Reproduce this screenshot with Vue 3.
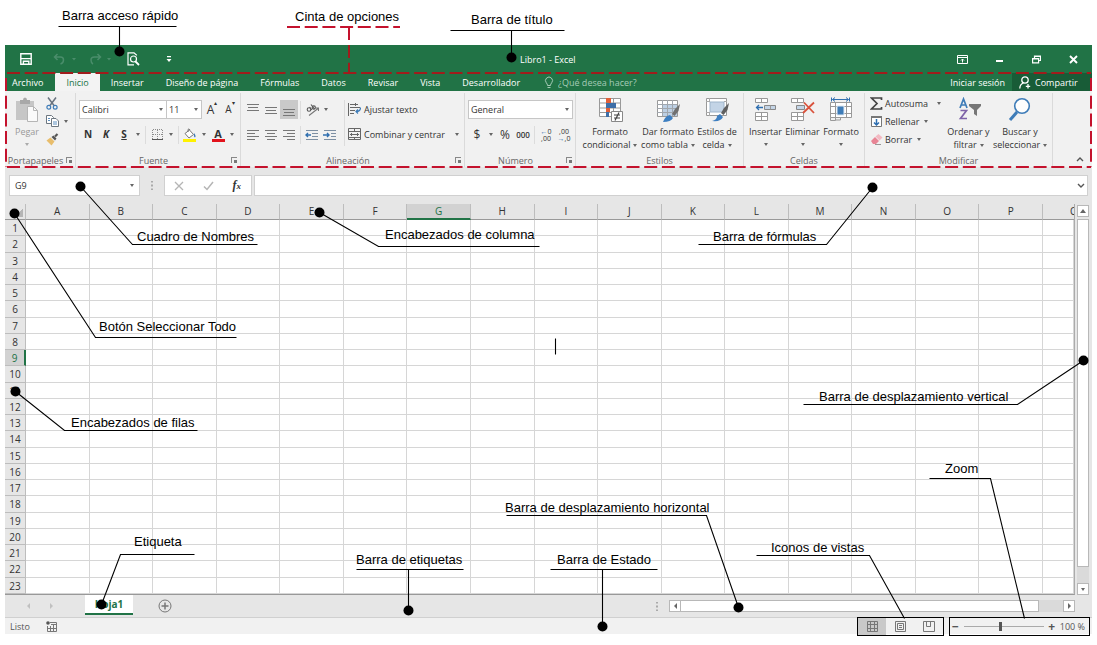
<script setup>
import { ref } from 'vue'

const tabs = ['Archivo', 'Inicio', 'Insertar', 'Diseño de página', 'Fórmulas', 'Datos', 'Revisar', 'Vista', 'Desarrollador']
const activeTab = ref('Inicio')
const columns = 'ABCDEFGHIJKLMNOPQ'.split('')
const rows = Array.from({ length: 23 }, (_, i) => i + 1)
const zoom = ref(46)

const callouts = [
  { text: 'Barra acceso rápido', x: 62, y: 20, line: '58,26 176,26' },
  { text: 'Barra de título', x: 471, y: 24, line: '450,30 564,30' },
  { text: 'Cuadro de Nombres', x: 137, y: 241, line: '80,186 132,244 257,244', dot: [80, 186] },
  { text: 'Encabezados de columna', x: 385, y: 239, line: '319,212 378,246 539,246', dot: [319, 212] },
  { text: 'Botón Seleccionar Todo', x: 99, y: 331, line: '14,213 95,337 236,337', dot: [14, 213] },
  { text: 'Encabezados de filas', x: 71, y: 427, line: '15,391 64,430 197,430', dot: [15, 391] },
  { text: 'Barra de fórmulas', x: 713, y: 241, line: '872,187 826,244 698,244', dot: [872, 187] },
  { text: 'Barra de desplazamiento vertical', x: 819, y: 401, line: '1083,360 1017,404 803,404', dot: [1083, 360] },
  { text: 'Zoom', x: 945, y: 473, line: '929,478 990,478 1024,618' },
  { text: 'Barra de desplazamiento horizontal', x: 505, y: 512, line: '506,515 706,515 738,607', dot: [738, 607] },
  { text: 'Iconos de vistas', x: 771, y: 552, line: '756,555 869,555 904,618' },
  { text: 'Etiqueta', x: 134, y: 546, line: '194,554 120,554 101,604', dot: [101, 604] },
  { text: 'Barra de etiquetas', x: 356, y: 564, line: '356,569 463,569' },
  { text: 'Barra de Estado', x: 557, y: 564, line: '550,569 657,569' }
]
const stems = [
  { x: 119, y1: 26, y2: 51 },
  { x: 511, y1: 30, y2: 57 },
  { x: 408, y1: 569, y2: 610 },
  { x: 602, y1: 569, y2: 626 }
]
</script>

<template>
  <main class="page">
    <div class="window">
      <header class="titlebar">
        <button class="tb save" aria-label="Guardar">
          <svg width="12" height="12" viewBox="0 0 12 12" fill="none" stroke="#fff" stroke-width="1.4"><path d="M.8.8h10.4v10.4H.8zM.8 5.6h10.4M3.400 11V8.200h5.400V11" /></svg>
        </button>
        <button class="tb undo" aria-label="Deshacer">
          <svg width="24" height="12" viewBox="0 0 24 12" fill="none" stroke="#4a8d6b" stroke-width="1.5"><path d="M4.500 1 1.500 4l3 3M2 4h5.500q3 0 3 3t-3 4" /><path d="m19 5 2 2.500 2-2.500z" fill="#4a8d6b" stroke="none" /></svg>
        </button>
        <button class="tb redo" aria-label="Rehacer">
          <svg width="24" height="12" viewBox="0 0 24 12" fill="none" stroke="#4a8d6b" stroke-width="1.5"><path d="m8.500 1 3 3-3 3M11 4H5.500q-3.500 0-3.500 3t2 4" /><path d="m18 5 2 2.500 2-2.500z" fill="#4a8d6b" stroke="none" /></svg>
        </button>
        <button class="tb preview" aria-label="Vista previa">
          <svg width="13" height="14" viewBox="0 0 13 14" fill="none" stroke="#fff" stroke-width="1.200"><path d="M9.500 3.500V3L7 .8H1v12h6" /><circle cx="6.500" cy="7" r="3" /><path d="m8.500 9.500 3.500 3.500" stroke-width="1.800" /></svg>
        </button>
        <button class="tb custom" aria-label="Personalizar">
          <svg width="6" height="8" viewBox="0 0 6 8" fill="#fff"><path d="M1 1h4v1.200H1zM.5 4h5L3 7z" /></svg>
        </button>
        <h1 class="doc">Libro1 - Excel</h1>
        <button class="wb" aria-label="Opciones de cinta">
          <svg width="11" height="9" viewBox="0 0 11 9" fill="none" stroke="#fff"><path d="M.5.500h10v8H.5zM.5 2.500h10M5.500 7.500V4M4 5.500 5.500 4 7 5.500" /></svg>
        </button>
        <button class="wb" aria-label="Minimizar">
          <svg width="9" height="9" viewBox="0 0 9 9"><path d="M1 5h7v2H1z" fill="#fff" /></svg>
        </button>
        <button class="wb" aria-label="Restaurar">
          <svg width="9" height="9" viewBox="0 0 9 9" fill="none" stroke="#fff" stroke-width="1.200"><path d="M2.500 3V1h6v4.500h-2M.6 3.500h6v4.300h-6zM2.500 1.500h6M.6 4h6" /></svg>
        </button>
        <button class="wb" aria-label="Cerrar">
          <svg width="9" height="9" viewBox="0 0 9 9" stroke="#fff" stroke-width="1.900"><path d="m1 1 7 7M8 1 1 8" /></svg>
        </button>
      </header>

      <nav class="tabs">
        <button v-for="t in tabs" :key="t" class="tab" :class="{ active: t === activeTab }" @click="activeTab = t">{{ t }}</button>
        <label class="tell">
          <svg width="10" height="13" viewBox="0 0 10 13" fill="none" stroke="#a5cbb6"><path d="M3.500 9.500Q3.500 8 2.300 6.800A3.500 3.500 0 1 1 7.700 6.800Q6.500 8 6.500 9.500zM3.500 11.500h3" /></svg>
          <input type="text" placeholder="¿Qué desea hacer?" aria-label="¿Qué desea hacer?">
        </label>
        <button class="signin">Iniciar sesión</button>
        <button class="share">
          <svg width="12" height="13" viewBox="0 0 12 13" fill="none" stroke="#fff" stroke-width="1.300"><circle cx="6" cy="4" r="3.200" /><path d="M.8 12.500Q1 8 4.500 7M9 8v4.500M6.800 10.300h4.400" /></svg>
          Compartir
        </button>
      </nav>

      <section class="ribbon">
        <div class="group g-clip">
          <div class="body">
            <button class="big paste">
              <svg width="24" height="26" viewBox="0 0 24 26"><path d="M1 4h18v19H1z" fill="#c6c6c6" /><path d="M5 7V3h3q0-2.500 2-2.500T12 3h3v4z" fill="#a8a8a8" /><path d="M12.500 9.500h6l4 4v11h-10z" fill="#fafafa" stroke="#b5b5b5" /><path d="M18.500 9.500v4h4" fill="none" stroke="#b5b5b5" /></svg>
              <span>Pegar</span><i class="arr soft"></i>
            </button>
            <div class="stack">
              <button class="ib" aria-label="Cortar">
                <svg width="12" height="13" viewBox="0 0 12 13" fill="none"><path d="m2 .5 6 8M10 .5l-6 8" stroke="#6a7480" stroke-width="1.500" /><circle cx="2.800" cy="10.300" r="1.900" stroke="#3e7cb8" stroke-width="1.200" /><circle cx="9.200" cy="10.300" r="1.900" stroke="#3e7cb8" stroke-width="1.200" /></svg>
              </button>
              <button class="ib wide" aria-label="Copiar">
                <svg width="13" height="12" viewBox="0 0 13 12" fill="#fff" stroke="#6d7780"><path d="M.5.500h5l2 2v6h-7z" /><path d="M5.500 3.500h4.500l2.500 2.500v5.500h-7z" /><path d="M2 3.500h2M2 5.500h2M7 7h4M7 9h4" stroke="#5d8fbf" /></svg>
                <i class="arr"></i>
              </button>
              <button class="ib" aria-label="Copiar formato">
                <svg width="13" height="13" viewBox="0 0 13 13"><path d="m.5 7.500 4-3 4 4-3 4z" fill="#e8bd6c" /><path d="m5.500 4 2-1.500 3 3L9 7.500z" fill="#555" /><path d="m9 3.500 2.500-2.500" stroke="#555" stroke-width="2.200" /></svg>
              </button>
            </div>
          </div>
          <footer><span>Portapapeles</span><i class="launch"></i></footer>
        </div>

        <div class="group g-font">
          <div class="body rows">
            <div class="row">
              <label class="sel s-font"><select aria-label="Fuente"><option>Calibri</option></select><i class="arr"></i></label>
              <label class="sel s-size"><select aria-label="Tamaño"><option>11</option></select><i class="arr"></i></label>
              <div class="sizers">
                <button class="b grow" aria-label="Aumentar tamaño">A<sup>▴</sup></button>
                <button class="b shrink" aria-label="Disminuir tamaño">A<sup>▾</sup></button>
              </div>
            </div>
            <div class="row">
              <button class="b nks"><b>N</b></button>
              <button class="b nks"><b><em>K</em></b></button>
              <button class="b nks"><b><u>S</u></b></button>
              <i class="arr d"></i><i class="sep"></i>
              <button class="b" aria-label="Bordes">
                <svg width="11" height="11" viewBox="0 0 11 11" fill="none" stroke="#8a8a8a"><path d="M.5 10V.5h10V10M5.500 1v9M1 5.500h9" stroke-dasharray="1 1" /><path d="M0 10.500h11" stroke="#555" /></svg>
              </button>
              <i class="arr d"></i><i class="sep"></i>
              <button class="b" aria-label="Color de relleno">
                <svg width="14" height="14" viewBox="0 0 14 14"><path d="m2 5.500 4.500-3.500 4 4.500L6 10z" fill="#fff" stroke="#777" /><path d="M5 4V1.500Q6 0 7 2" fill="none" stroke="#777" /><path d="M11 5q2.500 3 1 4.500Q10.500 9 11 5" fill="#3e7cb8" /><path d="M0 11h13v3H0z" fill="#fff200" /></svg>
              </button>
              <i class="arr d"></i>
              <button class="b fc" aria-label="Color de fuente"><b>A</b></button>
              <i class="arr d"></i>
            </div>
          </div>
          <footer><span>Fuente</span><i class="launch"></i></footer>
        </div>

        <div class="group g-align">
          <div class="body">
            <div class="rows left">
              <div class="row">
                <button class="b" aria-label="Alinear arriba"><svg width="12" height="12" viewBox="0 0 12 12" stroke="#777"><path d="M0 .5h12M1 3.500h10M0 6.500h12" /></svg></button>
                <button class="b" aria-label="Alinear en medio"><svg width="12" height="12" viewBox="0 0 12 12" stroke="#777"><path d="M0 3.500h12M1 6.500h10M0 9.500h12" /></svg></button>
                <button class="b on" aria-label="Alinear abajo"><svg width="12" height="12" viewBox="0 0 12 12" stroke="#777"><path d="M0 5.500h12M1 8.500h10M0 11.500h12" /></svg></button>
                <i class="sep"></i>
                <button class="b" aria-label="Orientación"><svg width="13" height="12" viewBox="0 0 13 12" fill="none" stroke="#555" stroke-width="1.100"><circle cx="3" cy="5.500" r="1.800" /><path d="m3.500 3 2.500 3M5 .5l3.500 4.500" /><circle cx="7.800" cy="3.500" r="1.600" /><path d="m3 11.500 9-7M12.500 7V4H9.500" stroke="#777" /></svg></button>
                <i class="arr d"></i>
              </div>
              <div class="row">
                <button class="b" aria-label="Izquierda"><svg width="12" height="12" viewBox="0 0 12 12" stroke="#777"><path d="M0 1.500h12M0 4.500h8M0 7.500h12M0 10.500h8" /></svg></button>
                <button class="b" aria-label="Centrar"><svg width="12" height="12" viewBox="0 0 12 12" stroke="#777"><path d="M0 1.500h12M2 4.500h8M0 7.500h12M2 10.500h8" /></svg></button>
                <button class="b" aria-label="Derecha"><svg width="12" height="12" viewBox="0 0 12 12" stroke="#777"><path d="M0 1.500h12M4 4.500h8M0 7.500h12M4 10.500h8" /></svg></button>
                <i class="sep"></i>
                <button class="b" aria-label="Disminuir sangría"><svg width="14" height="12" viewBox="0 0 14 12" stroke="#7d8fa3" fill="none"><path d="M1 1.500h12M7 4.500h6M7 7.500h6M1 10.500h12" /><path d="M6 6H1M3 4 1 6l2 2" stroke="#2f6fb0" stroke-width="1.400" /></svg></button>
                <button class="b" aria-label="Aumentar sangría"><svg width="14" height="12" viewBox="0 0 14 12" stroke="#7d8fa3" fill="none"><path d="M1 1.500h12M8 4.500h5M8 7.500h5M1 10.500h12" /><path d="M0 6h5.500M4 4l2 2-2 2" stroke="#2f6fb0" stroke-width="1.400" /></svg></button>
              </div>
            </div>
            <i class="sep tall"></i>
            <div class="rows wraps">
              <button class="row text">
                <svg width="13" height="13" viewBox="0 0 13 13" fill="none" stroke="#666"><path d="M.5 0v13M2 1.500h8M2 4.500h10M2 7.500h5M2 10.500h4M7.500 0v3" /><path d="M12.500 4.500q0 4-4 4M10 6.500l-2 2 2 2" stroke="#3e7cb8" stroke-width="1.200" /></svg>
                Ajustar texto
              </button>
              <button class="row text">
                <svg width="13" height="13" viewBox="0 0 13 13" fill="none" stroke="#666"><path d="M.5.500h12v11H.5zM.5 3.500h12M.5 9.500h12M6.500.500v3M6.500 9.500v2M2 6.500h9M4 5 2.500 6.500 4 8M9 5l1.500 1.500L9 8" /></svg>
                Combinar y centrar<i class="arr after"></i>
              </button>
            </div>
          </div>
          <footer><span>Alineación</span><i class="launch"></i></footer>
        </div>

        <div class="group g-num">
          <div class="body rows">
            <div class="row"><label class="sel s-num"><select aria-label="Formato de número"><option>General</option></select><i class="arr"></i></label></div>
            <div class="row">
              <button class="b money">$</button><i class="arr d"></i>
              <button class="b money">%</button>
              <button class="b zeros">000</button>
              <i class="sep"></i>
              <button class="b dec" aria-label="Aumentar decimales"><span><u>←</u>0</span><span>,00</span></button>
              <button class="b dec" aria-label="Disminuir decimales"><span>,00</span><span><u>→</u>,0</span></button>
            </div>
          </div>
          <footer><span>Número</span><i class="launch"></i></footer>
        </div>

        <div class="group g-styles">
          <div class="body">
            <button class="big w58">
              <svg width="25" height="26" viewBox="0 0 25 26"><path d="M1.500 1.500h21v18h-21zM8.500 1v19M15.500 1v19M1 6h21M1 11h21M1 15.500h21" fill="#fff" stroke="#999" /><path d="M8 1h5v5H8zM8 11h4v4H8z" fill="#e0603a" /><path d="M8 6h10v5H8zM8 15h3v5H8z" fill="#3e6fa8" /><path d="M13.500 14.500h11v10h-11z" fill="#fff" stroke="#888" /><path d="M16 18h6M16 21h6M21 15.500l-4 8" stroke="#444" stroke-width="1.200" /></svg>
              <span>Formato<br>condicional<i class="arr in"></i></span>
            </button>
            <button class="big w58">
              <svg width="25" height="26" viewBox="0 0 25 26"><path d="M1.500 3.500h20v16h-20z" fill="#fff" stroke="#999" /><path d="M7 7h14v12H7z" fill="#bdd0e4" /><path d="M6.500 3v16M11.500 3v16M16.500 3v16M1 7.500h20M1 11.500h20M1 15.500h20" stroke="#a0a6ad" fill="none" /><path d="m24 7-1.500 7-4 5-2.500-2 3-5z" fill="#707070" /><path d="M7 25q2-6 7-7l3 3q-2 4-10 4" fill="#3e7fc1" /></svg>
              <span>Dar formato<br>como tabla<i class="arr in"></i></span>
            </button>
            <button class="big w40">
              <svg width="25" height="26" viewBox="0 0 25 26"><path d="M1.500 1.500h20v17h-20z" fill="#fff" stroke="#999" /><path d="M5 5h14v10H5z" fill="#c3d4e6" stroke="#9eb4ca" /><path d="M4.500 1v4M1 4.500h4M4.500 15v4M1 15.500h4M19 4.500h3" stroke="#aaa" /><path d="m24 6-1.500 7-4 5-2.500-2 3-5z" fill="#606060" /><path d="M7 24q5-1 5-5l3-2 3 3q-2 5-11 4" fill="#3e7fc1" /></svg>
              <span>Estilos de<br>celda<i class="arr in"></i></span>
            </button>
          </div>
          <footer><span>Estilos</span></footer>
        </div>

        <div class="group g-cells">
          <div class="body">
            <button class="big w36">
              <svg width="23" height="26" viewBox="0 0 23 26" fill="#fff" stroke="#999"><path d="M1.500 1.500h12v4h-12zM7.500 1.500v4M1.500 15.500h12v8h-12zM7.500 15.500v8M1.500 19.500h12" /><path d="M10.500 8.500h11v4h-11z" fill="#c3d4e6" stroke="#888" /><path d="M16.500 8.500v4" /><path d="M9 10.500H2.500M5 8l-2.500 2.500L5 13" stroke="#2f6fb0" stroke-width="1.300" fill="none" /></svg>
              <span>Insertar</span><i class="arr"></i>
            </button>
            <button class="big w36">
              <svg width="25" height="26" viewBox="0 0 25 26" fill="#fff" stroke="#999"><path d="M1.500 1.500h12v4h-12zM7.500 1.500v4M1.500 15.500h12v8h-12zM7.500 15.500v8M1.500 19.500h12" /><path d="M6.500 8.500h8v4h-8z" fill="#c3d4e6" stroke="#888" /><path d="m14 5.500 10 10.500M24 5.500 13 16" stroke="#d9523c" stroke-width="1.800" /></svg>
              <span>Eliminar</span><i class="arr"></i>
            </button>
            <button class="big w40">
              <svg width="24" height="26" viewBox="0 0 24 26" fill="none" stroke="#999"><path d="M1.500 5.500h21v15h-21z" fill="#fff" /><path d="M6.500 5.500v18h-5v-3M17.500 5.500v15M1.500 9.500h21M1.500 16.500h21M11.500 20v3h-5" /><path d="M8 9h7v9H8z" fill="#3e7cb8" stroke="#dfe8f1" /><path d="M2.500.500v4M20.500.500v4M3.500 2.500h16M6 .5l-2.500 2L6 4.500M17 .5l2.500 2-2.500 2" stroke="#2f6fb0" /></svg>
              <span>Formato</span><i class="arr"></i>
            </button>
          </div>
          <footer><span>Celdas</span></footer>
        </div>

        <div class="group g-edit">
          <div class="body">
            <div class="stack wide-stack">
              <button class="text"><svg width="13" height="13" viewBox="0 0 13 13" fill="none" stroke="#444" stroke-width="1.700"><path d="M11.500 3V1H1.500L7 6.500l-5.500 5.500h10v-2" /></svg>Autosuma<i class="arr after"></i></button>
              <button class="text"><svg width="13" height="13" viewBox="0 0 13 13" fill="#fff" stroke="#777"><path d="M1.500 1.500h10v10h-10z" /><path d="M1 2h11" stroke-width="2" /><path d="M6.500 4v6M4 7.500l2.500 2.500L9 7.500" stroke="#2f6fb0" stroke-width="1.500" fill="none" /></svg>Rellenar<i class="arr in"></i></button>
              <button class="text"><svg width="13" height="13" viewBox="0 0 13 13"><path d="m1 8 4-4 4 4-3 3H3z" fill="#e88595" /><path d="m5.500 3.500 3-2.500 4 3.500-3 3z" fill="#f3b9c2" /><path d="M5 11.500h6" stroke="#999" /></svg>Borrar<i class="arr in"></i></button>
            </div>
            <button class="big w45">
              <svg width="26" height="26" viewBox="0 0 26 26" fill="none"><path d="m4 11 3.500-9L11 11M5.300 8h4.500" stroke="#3e7cb8" stroke-width="1.700" /><path d="M4.500 13.500h6l-6 8h6.500" stroke="#7e63a8" stroke-width="1.700" /><path d="M13 7h12v2l-4 4v6l-3-2v-4l-5-4z" fill="#777" /></svg>
              <span>Ordenar y<br>filtrar<i class="arr in"></i></span>
            </button>
            <button class="big w56">
              <svg width="24" height="26" viewBox="0 0 24 26" fill="none" stroke="#3e7cb8"><circle cx="14" cy="9" r="7.300" stroke-width="1.600" fill="#fdfdfd" /><path d="m9 15-7 8" stroke-width="3" /></svg>
              <span>Buscar y<br>seleccionar<i class="arr in"></i></span>
            </button>
          </div>
          <footer><span>Modificar</span></footer>
        </div>
        <button class="collapse" aria-label="Contraer la cinta"><svg width="8" height="6" viewBox="0 0 8 6" fill="none" stroke="#555" stroke-width="1.400"><path d="m1 5 3-3 3 3" /></svg></button>
      </section>

      <section class="fbar">
        <label class="namebox"><input type="text" value="G9" aria-label="Cuadro de nombres"><i class="arr"></i></label>
        <i class="dots"></i>
        <div class="fbtns">
          <button aria-label="Cancelar"><svg width="10" height="10" viewBox="0 0 10 10" stroke="#b5b5b5" stroke-width="1.300"><path d="m1 1 8 8M9 1 1 9" /></svg></button>
          <button aria-label="Introducir"><svg width="11" height="10" viewBox="0 0 11 10" fill="none" stroke="#b5b5b5" stroke-width="1.500"><path d="m1 5.500 3 3L10 1" /></svg></button>
          <button class="fx">f<sub>x</sub></button>
        </div>
        <label class="formula"><input type="text" aria-label="Barra de fórmulas"><svg width="8" height="6" viewBox="0 0 8 6" fill="none" stroke="#555" stroke-width="1.400"><path d="m1 1 3 3 3-3" /></svg></label>
      </section>

      <section class="sheet">
        <div class="grid">
          <table>
            <colgroup><col class="c-num"><col v-for="c in 16" :key="c"><col class="c-last"></colgroup>
            <thead>
              <tr><th class="corner" aria-label="Seleccionar todo"></th><th v-for="c in columns" :key="c" :class="{ cur: c === 'G', cut: c === 'Q' }">{{ c }}</th></tr>
            </thead>
            <tbody>
              <tr v-for="r in rows" :key="r"><th :class="{ cur: r === 9 }">{{ r }}</th><td v-for="c in columns" :key="c"></td></tr>
            </tbody>
          </table>
        </div>
        <div class="vscroll">
          <button aria-label="Arriba"><i class="arr up"></i></button>
          <div class="vthumb"></div><div class="vtrack"></div>
          <button aria-label="Abajo"><i class="arr"></i></button>
        </div>
      </section>

      <section class="sheetbar">
        <button class="nav" aria-label="Hoja anterior"><svg width="5" height="6" viewBox="0 0 5 6"><path d="M4 0v6L1 3z" fill="#c0c0c0" /></svg></button>
        <button class="nav" aria-label="Hoja siguiente"><svg width="5" height="6" viewBox="0 0 5 6"><path d="M1 0v6l3-3z" fill="#c0c0c0" /></svg></button>
        <button class="sheettab">Hoja1</button>
        <button class="add" aria-label="Hoja nueva"><svg width="14" height="14" viewBox="0 0 14 14" fill="none" stroke="#777"><circle cx="7" cy="7" r="6" /><path d="M7 3.500v7M3.500 7h7" stroke-width="1.500" /></svg></button>
        <i class="dots push"></i>
        <div class="hscroll">
          <button aria-label="Izquierda"><svg width="5" height="6" viewBox="0 0 5 6"><path d="M4 0v6L1 3z" fill="#666" /></svg></button>
          <div class="hthumb"></div><div class="htrack"></div>
          <button aria-label="Derecha"><svg width="5" height="6" viewBox="0 0 5 6"><path d="M1 0v6l3-3z" fill="#666" /></svg></button>
        </div>
      </section>

      <footer class="status">
        <span>Listo</span>
        <button class="macro" aria-label="Grabar macro"><svg width="11" height="11" viewBox="0 0 11 11" fill="none" stroke="#777"><path d="M4 1.500h6.500v9h-9V5M1.500 7.500h9M4.500 5v5M7.500 4v6M5 3.500h5" /><circle cx="2" cy="2" r="1.800" fill="#555" stroke="none" /></svg></button>
        <div class="views">
          <button class="on" aria-label="Normal"><svg width="11" height="11" viewBox="0 0 11 11" fill="none" stroke="#777"><path d="M.5.500h10v10H.5zM3.500 0v11M7.500 0v11M0 3.500h11M0 7.500h11" /></svg></button>
          <button aria-label="Diseño de página"><svg width="11" height="11" viewBox="0 0 11 11" fill="none" stroke="#777"><path d="M.5.500h10v10H.5zM2.500 2.500h6v6h-6zM4 4.500h3M4 6.500h3" /></svg></button>
          <button aria-label="Salto de página"><svg width="12" height="11" viewBox="0 0 12 11" fill="none" stroke="#777"><path d="M.5.500h11v10H.5zM3.500.500v5h4v-5M7.500 5.500V3" /></svg></button>
        </div>
        <div class="zoom">
          <button aria-label="Alejar">−</button>
          <input v-model="zoom" type="range" min="0" max="100" aria-label="Zoom">
          <button aria-label="Acercar">+</button>
          <span>100 %</span>
        </div>
      </footer>
    </div>

    <svg class="notes" viewBox="0 0 1097 645" preserveAspectRatio="xMinYMin meet">
      <g class="dash">
        <path class="on-green" d="M7 73H1091" />
        <path class="on-green" d="M349 45V72" />
        <path d="M287 27H400M349 27V40M1091 78V167M7 167H1091M6 78V167" />
      </g>
      <g transform="translate(.5 .5)">
        <g v-for="s in stems" :key="s.x">
          <path class="lead" :d="`M${s.x} ${s.y1}V${s.y2}`" />
          <circle :cx="s.x" :cy="s.y2" r="5" />
        </g>
        <g v-for="c in callouts" :key="c.text">
          <polyline class="lead" :points="c.line" />
          <circle v-if="c.dot" :cx="c.dot[0]" :cy="c.dot[1]" r="5" />
        </g>
        <path class="lead" d="M555 338v16" />
      </g>
      <text v-for="c in callouts" :key="c.text" :x="c.x" :y="c.y">{{ c.text }}</text>
      <text x="295" y="21">Cinta de opciones</text>
    </svg>
  </main>
</template>

<style>
body { background: #fff; }
</style>

<style scoped>
* { box-sizing: border-box; }
.page { position: relative; padding: 45px 5px 10px; font: 9px/13px "Open Sans", "Noto Sans", sans-serif; color: #333; }
button { border: 0; padding: 0; margin: 0; background: none; font: inherit; color: inherit; white-space: nowrap; }
input, select { border: 0; margin: 0; padding: 0; background: none; font: inherit; color: inherit; min-width: 0; outline: 0; }
svg { display: block; flex: none; }
.notes { position: absolute; left: 0; top: 0; width: 100%; pointer-events: none; font: 13px "Liberation Sans", Arial, sans-serif; }
.lead { fill: none; stroke: #000; stroke-width: 1.1; }
.dash { fill: none; stroke: #c4122d; stroke-width: 2; stroke-dasharray: 13 4.7; }
.on-green { stroke: #a01c1c; }

.titlebar { display: flex; align-items: center; height: 28px; background: #217346; color: #fff; }
.titlebar button { display: flex; justify-content: center; align-items: center; height: 24px; }
.save { width: 42px; }
.undo, .redo { width: 36px; }
.preview { width: 29px; }
.custom { width: 42px; }
.doc { flex: 1; margin: 0; padding-left: 330px; font: inherit; }
.titlebar .wb { width: 37px; }

.tabs { display: flex; height: 18px; background: #217346; color: #fff; font-weight: 500; }
.tab { padding: 0 11px; }
.tab:first-child { padding: 0 12px 0 7px; }
.tab.active { background: #f3f3f3; color: #217346; }
.tell { display: flex; align-items: center; gap: 4px; margin-left: 13px; flex: 1; }
.tell input { width: 100px; }
.tell input::placeholder { color: #a5cbb6; opacity: 1; }
.signin { padding: 0 7px; }
.share { display: flex; align-items: center; gap: 4px; width: 80px; padding-left: 7px; background: #185c37; }

.ribbon { display: flex; height: 76px; background: #f1f1f1; }
.group { display: flex; flex-direction: column; border-right: 1px solid #dadada; margin-top: 2px; }
.body { display: flex; height: 60px; padding: 0 3px; }
.group footer { display: flex; align-items: center; height: 14px; color: #666; }
.group footer span { flex: 1; text-align: center; }
.g-clip { width: 71px; }
.g-clip .body { padding: 0; }
.g-font { width: 165px; }
.g-align { width: 224px; }
.g-num { width: 111px; }
.g-styles { width: 168px; }
.g-styles .body { padding-left: 5px; }
.g-cells { width: 121px; }
.g-edit { width: 188px; }
.launch { width: 6px; height: 6px; margin-right: 3px; border: solid #888; border-width: 1px 0 0 1px; background: linear-gradient(#777, #777) right bottom / 3px 3px no-repeat; }
.rows { display: flex; flex-direction: column; gap: 6px; padding-top: 7px; }
.row { display: flex; align-items: center; height: 19px; }
.left { width: 98px; }
.b { display: flex; justify-content: center; align-items: center; width: 18px; height: 19px; flex: none; }
.on { background: #c9c9c9; }
.d { width: 10px; }
.sep { width: 1px; height: 18px; margin: 0 2px; background: #dcdcdc; flex: none; }
.tall { height: 46px; margin-top: 7px; }
.arr { display: flex; justify-content: center; flex: none; }
.arr::before { content: ""; width: 0; height: 0; border: solid transparent; border-width: 3px 2px 0; border-top-color: #666; }
.soft { opacity: .5; }
.arr.up::before { border-width: 0 3px 4px; border-bottom-color: #666; }
.arr.in { display: inline-flex; vertical-align: middle; margin-left: 3px; }
.arr.after { margin-left: 7px; }
.stack { display: flex; flex-direction: column; padding-top: 1px; }
.ib { display: flex; align-items: center; gap: 5px; height: 18px; }
.big { display: flex; flex-direction: column; align-items: center; padding-top: 4px; gap: 2px; flex: none; }
.big > .arr { padding-top: 3px; }
.paste { width: 41px; color: #999; padding-left: 3px; }
.w58 { width: 58px; }
.w40 { width: 40px; }
.w36 { width: 37px; }
.w45 { width: 47px; }
.w56 { width: 56px; }
.wide-stack { width: 77px; padding-left: 2px; }
.text { display: flex; align-items: center; gap: 2px; height: 18px; }
.wraps { padding-left: 1px; }
.wraps .text { height: 19px; gap: 3px; }
.sel { display: flex; align-items: center; flex: none; height: 19px; border: 1px solid #c6c6c6; background: #fff; padding: 0 3px 0 2px; }
.sel select { flex: 1; appearance: none; }
.s-font { width: 88px; }
.s-size { width: 36px; margin-left: -1px; }
.s-num { width: 105px; }
.sizers { display: flex; padding-left: 1px; }
.grow { font-size: 12px; }
.shrink { font-size: 10px; }
.nks { font-size: 10px; }
.b sup { font-size: 6px; line-height: 6px; align-self: flex-start; }
.fc b { width: 13px; font-size: 11px; line-height: 11px; border-bottom: 3px solid #e2131c; }
.money { font-size: 12px; }
.zeros { font-size: 8px; font-weight: 600; }
.dec { flex-direction: column; font-size: 7px; line-height: 7px; }
.dec u { text-decoration: none; color: #2f6fb0; }
.collapse { margin-left: auto; align-self: flex-end; padding: 0 8px 5px 0; }

.fbar { display: flex; align-items: center; padding: 8px 4px; background: #e6e6e6; }
.namebox, .fbtns, .formula { display: flex; align-items: center; height: 21px; background: #fff; border: 1px solid #d0d0d0; }
.namebox { width: 131px; padding: 0 5px; }
.namebox input { flex: 1; }
.dots { width: 24px; height: 9px; background: radial-gradient(circle, #aaa 1px, transparent 1px) center / 24px 4px; }
.fbtns { width: 88px; }
.fbtns button { flex: 1; display: flex; justify-content: center; }
.fx { font: italic 700 12px/13px "Liberation Serif", serif; }
.fx sub { font-size: 9px; vertical-align: baseline; align-self: flex-end; line-height: 11px; }
.formula { flex: 1; margin-left: 2px; padding-right: 2px; }
.formula input { flex: 1; }

.sheet { display: flex; height: 391px; background: #e6e6e6; }
.grid { flex: 1; min-width: 0; }
table { width: 100%; height: 391px; table-layout: fixed; border-collapse: separate; border-spacing: 0; background: #fff; border-right: 1px solid #ababab; border-bottom: 1px solid #999; }
.c-num { width: 21px; }
.c-last { width: 31px; }
th, td { padding: 0; overflow: hidden; border: solid #d6d6d6; border-width: 0 1px 1px 0; line-height: 13px; }
th { background: #e6e6e6; font-weight: 400; font-size: 10px; border-color: #bdbdbd; }
tbody th { padding-top: 2px; }
thead th { height: 16px; border-bottom-color: #999; }
th.cut { text-align: left; text-indent: 27px; border-right: 0; }
th.cur { background: #d2d2d2; color: #217346; }
thead th.cur { border-bottom: 2px solid #217346; }
tbody th.cur { border-right: 2px solid #217346; }
.corner { background: linear-gradient(135deg, transparent 50%, #b5b5b5 50%) 9px 4px / 9px 9px no-repeat #e6e6e6; }
.vscroll { display: flex; flex-direction: column; width: 17px; padding: 1px 3px 0 2px; }
.vscroll button, .hscroll button { display: flex; align-items: center; justify-content: center; width: 12px; height: 12px; background: #fff; border: 1px solid #b8b8b8; flex: none; }
.vthumb { flex: 1; margin-top: 2px; background: #fff; border: 1px solid #b8b8b8; }
.vtrack { height: 16px; background: #dadada; }

.sheetbar { display: flex; align-items: center; height: 23px; background: #e6e6e6; border-bottom: 1px solid #d0d0d0; padding-right: 17px; }
.nav { width: 23px; display: flex; justify-content: center; }
.nav:first-child { margin-left: 12px; }
.sheettab { align-self: flex-start; width: 48px; height: 20px; margin-left: 22px; background: #fff; border-bottom: 2px solid #217346; color: #217346; font-size: 10px; font-weight: 700; }
.add { margin-left: 25px; }
.push { margin-left: auto; }
.hscroll { display: flex; width: 37.9%; background: #dadada; }
.hthumb { flex: 1; background: #fff; border: 1px solid #b8b8b8; border-left: 0; }
.htrack { width: 24px; }

.status { display: flex; align-items: center; height: 16px; background: #f1f1f1; padding: 0 2px 0 5px; color: #555; }
.macro { margin-left: 16px; }
.views { display: flex; height: 19px; width: 87px; margin-left: auto; border: 1px solid #000; }
.views button { flex: 1; display: flex; align-items: center; justify-content: center; }
.zoom { display: flex; align-items: center; justify-content: space-between; height: 19px; width: 141px; margin-left: 5px; padding: 0 4px 0 2px; border: 1px solid #000; }
.zoom button { font-size: 12px; font-weight: 700; }
.zoom input { appearance: none; width: 80px; height: 10px; background: linear-gradient(#aaa, #aaa) center / 100% 1px no-repeat; }
.zoom input::-webkit-slider-thumb { appearance: none; width: 3px; height: 9px; background: #555; }
</style>
